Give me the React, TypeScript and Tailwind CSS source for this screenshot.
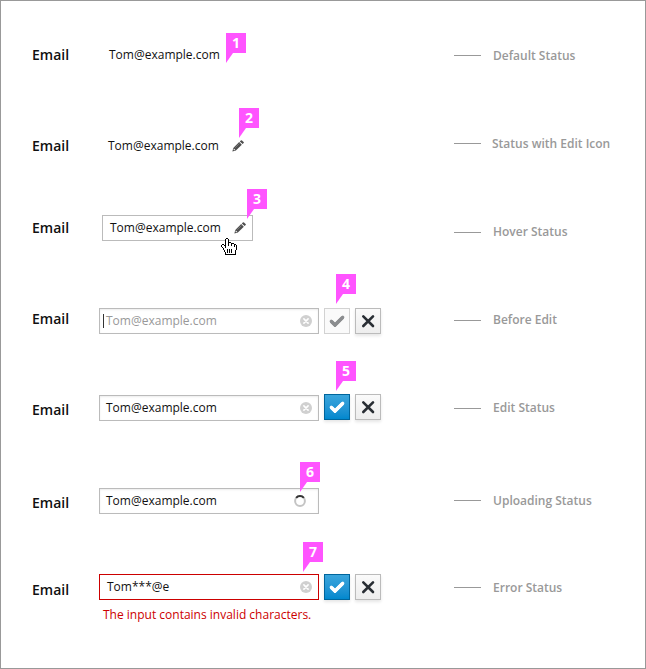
import type { ReactNode } from "react";

const HAND = [
  ".....XX.........",
  "....XooX........",
  "....XooX........",
  "....XooX........",
  "....XooXXX......",
  "....XooXooXXX...",
  ".XX.XooXooXooXX.",
  "XooXXooXooXooXoX",
  "XoooXooooooooXoX",
  ".XooXooooooooooX",
  "..XooooooooooooX",
  "..XoooXoXoXooooX",
  "...XooXoXoXoooX.",
  "...XooXoXoXoooX.",
  "....XoXoXoXoooX.",
  "....XoooooooooX.",
  "....XXXXXXXXXXX.",
];

function HandCursor({ className }: { className: string }) {
  return (
    <svg width="16" height="17" viewBox="0 0 16 17" shapeRendering="crispEdges" className={className}>
      {HAND.flatMap((row, y) =>
        row.split("").map((c, x) =>
          c === "." ? null : (
            <rect key={`${x}-${y}`} x={x} y={y} width="1" height="1" fill={c === "X" ? "#000" : "#fff"} />
          )
        )
      )}
    </svg>
  );
}

function Pencil() {
  return (
    <svg width="12" height="12" viewBox="0 0 12 12" fill="#4d4d4d" className="-mt-px">
      <path d="M0.4 11.6 1.3 8 7.2 2.1 9.8 4.7 3.9 10.6z" />
      <path d="M7.8 1.4 8.8 .4q.6-.5 1.2 0L11.6 1.9q.5.6 0 1.2L10.6 4.1z" />
      <path d="M1.9 8.5 3.3 9.9 2 10.3 1.5 9.8z" fill="#fff" />
      <path d="M3.1 7.8 7.5 3.4" stroke="#999" strokeWidth=".6" />
    </svg>
  );
}

function Clear() {
  return (
    <svg width="12" height="12" viewBox="0 0 12 12">
      <circle cx="6" cy="6" r="6" fill="#d0d0d0" />
      <path d="M3.9 3.9 8.1 8.1M8.1 3.9 3.9 8.1" stroke="#fff" strokeWidth="1.6" strokeLinecap="round" />
    </svg>
  );
}

function Spinner() {
  return (
    <svg width="12" height="12" viewBox="0 0 12 12" fill="none" strokeWidth="2">
      <circle cx="6" cy="6" r="4.9" stroke="#c4c4c4" />
      <path d="M2.2 2.9A4.9 4.9 0 0 1 9.8 2.9" stroke="#333" />
    </svg>
  );
}

function CheckButton({ disabled }: { disabled?: boolean }) {
  return (
    <button
      className={
        disabled
          ? "ml-[5px] flex size-[26px] items-center justify-center border border-[#d2d2d2] bg-[#fafafa] text-[#8b8d8f]"
          : "ml-[5px] flex size-[26px] items-center justify-center border border-[#00659c] bg-linear-to-b from-[#39a5dc] to-[#0088ce] text-white shadow-[0_2px_3px_rgba(3,3,3,0.1)]"
      }
    >
      <svg width="16" height="12" viewBox="0 0 16 12" fill="none">
        <path d="M2.2 6.2 6 10 13.8 2.2" stroke="currentColor" strokeWidth="3.6" strokeLinecap="butt" strokeLinejoin="miter" />
        <path d="M2.2 6.2 6 10 13.8 2.2" stroke="currentColor" strokeWidth="3" strokeLinecap="round" />
      </svg>
    </button>
  );
}

function CloseButton() {
  return (
    <button className="ml-[5px] flex size-[26px] items-center justify-center border border-[#bbb] bg-linear-to-b from-[#fafafa] to-[#ededed] shadow-[0_2px_3px_rgba(3,3,3,0.1)]">
      <svg width="14" height="14" viewBox="0 0 14 14">
        <path d="M2.3 2.3 12 12M12 2.3 2.3 12" stroke="#292e34" strokeWidth="2.6" strokeLinecap="round" />
      </svg>
    </button>
  );
}

function Badge({ n, className }: { n: number; className: string }) {
  return (
    <div className={`absolute h-[30px] w-5 ${className}`}>
      <div className="flex h-5 items-center justify-center bg-[#ff54ff] text-[14px] leading-5 font-bold text-white">{n}</div>
      <div className="h-[10px] w-[7px] bg-[#ff54ff] [clip-path:polygon(0_0,100%_0,0_100%)]" />
    </div>
  );
}

function Row({
  height,
  labelPad,
  notePad,
  note,
  noteClass = "ml-[12px]",
  children,
}: {
  height: string;
  labelPad: string;
  notePad: string;
  note: string;
  noteClass?: string;
  children: ReactNode;
}) {
  return (
    <div className={`relative flex shrink-0 items-start ${height}`}>
      <div className={`w-[67px] shrink-0 text-[14px] leading-5 font-semibold text-[#111] ${labelPad}`}>Email</div>
      <div className="w-[355px] shrink-0">{children}</div>
      <div className={`flex items-center whitespace-nowrap text-[12px] leading-5 font-semibold text-[#999] ${notePad}`}>
        <span className="h-px w-[27px] bg-[#999]" />
        <span className={noteClass}>{note}</span>
      </div>
    </div>
  );
}

const field = "flex h-[26px] items-center border border-[#bbb] bg-white leading-5 ";
const wide = "w-[220px] shadow-[inset_0_1px_2px_rgba(0,0,0,0.08)] pl-[6px] ";

export default function App() {
  return (
    <main className="flex h-[669px] w-[646px] flex-col overflow-hidden border border-[#999] bg-white pt-[41px] pl-[31px] font-['Open_Sans','Noto_Sans',sans-serif] text-[12px] text-[#111]">
      <Row height="h-[91px]" labelPad="pt-[3px]" notePad="pt-[3px]" note="Default Status" noteClass="ml-[12px] translate-y-px">
        <div className="flex h-[26px] items-center pl-[10px] leading-5">Tom@example.com</div>
        <Badge n={1} className="-top-[9px] left-[194px]" />
      </Row>
      <Row
        height="h-[82px]"
        labelPad="pt-[3px]"
        notePad="pt-[0px]"
        note="Status with Edit Icon"
        noteClass="ml-[11px] translate-y-px"
      >
        <div className="flex h-[26px] w-[145px] items-center justify-between pl-[9px] leading-5">
          Tom@example.com <Pencil />
        </div>
        <Badge n={2} className="-top-[25px] left-[207px]" />
      </Row>
      <Row height="h-[93px]" labelPad="pt-[3px]" notePad="pt-[7px]" note="Hover Status">
        <div className={field + "ml-[3px] w-[151px] justify-between pr-[6px] pl-[7px]"}>
          Tom@example.com <Pencil />
        </div>
        <Badge n={3} className="-top-[26px] left-[215px]" />
        <HandCursor className="absolute top-[23px] left-[189px]" />
      </Row>
      <Row height="h-[86px]" labelPad="pt-[1px]" notePad="pt-[2px]" note="Before Edit">
        <div className="flex">
          <div className={field + wide + "justify-between pr-[6px] !pl-[3px] text-[#999]"}>
            <span className="flex items-center">
              <span className="mr-[2px] h-[14px] w-px bg-[#333]" />
              Tom@example.com
            </span>
            <Clear />
          </div>
          <CheckButton disabled />
          <CloseButton />
        </div>
        <Badge n={4} className="-top-[34px] left-[304px]" />
      </Row>
      <Row height="h-[94px]" labelPad="pt-[6px]" notePad="pt-[4px]" note="Edit Status">
        <div className="flex">
          <div className={field + wide + "mt-px justify-between pr-[6px]"}>
            Tom@example.com <Clear />
          </div>
          <CheckButton />
          <CloseButton />
        </div>
        <Badge n={5} className="-top-[33px] left-[304px]" />
      </Row>
      <Row
        height="h-[86px]"
        labelPad="pt-[5px]"
        notePad="pt-[2px]"
        note="Uploading Status"
        noteClass="ml-[12px] translate-y-px"
      >
        <div className={field + wide + "justify-between pr-[12px]"}>
          Tom@example.com <Spinner />
        </div>
        <Badge n={6} className="-top-[26px] left-[268px]" />
      </Row>
      <Row
        height="h-[70px]"
        labelPad="pt-[6px]"
        notePad="pt-[3px]"
        note="Error Status"
        noteClass="ml-[12px] translate-y-px"
      >
        <div className="flex">
          <div className="flex h-[26px] w-[220px] items-center justify-between border border-[#c00] bg-white pr-[6px] pl-[7px] leading-5">
            Tom***@e <Clear />
          </div>
          <CheckButton />
          <CloseButton />
        </div>
        <p className="mt-[5px] ml-1 text-[12px] leading-5 text-[#c00]">The input contains invalid characters.</p>
        <Badge n={7} className="-top-[32px] left-[271px]" />
      </Row>
    </main>
  );
}
